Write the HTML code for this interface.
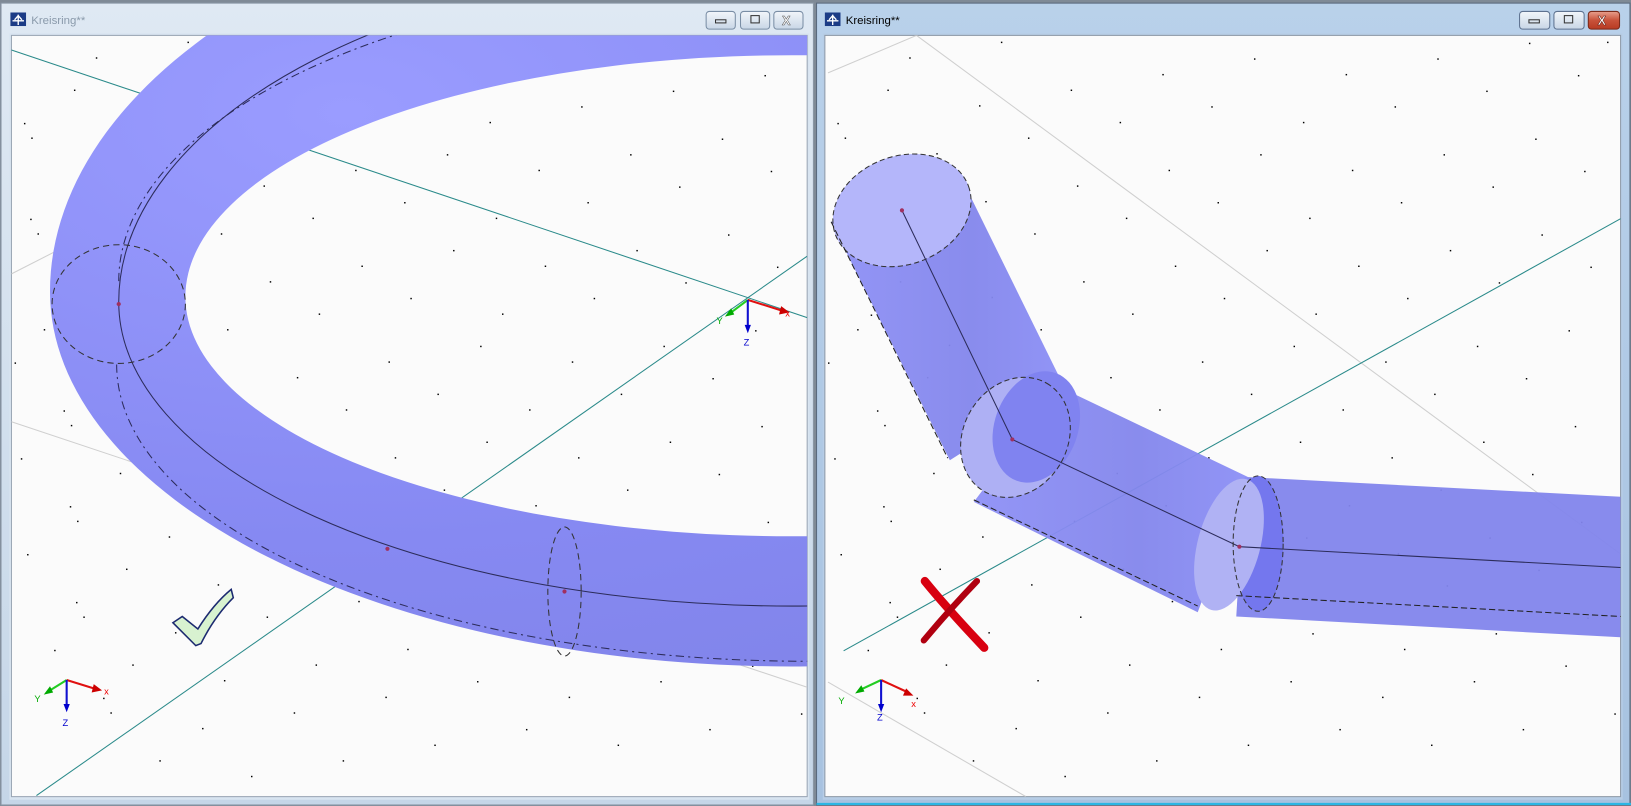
<!DOCTYPE html>
<html><head><meta charset="utf-8"><style>
html,body{margin:0;padding:0;background:#fff;overflow:hidden}
svg{display:block}
</style></head><body>
<svg width="1631" height="806" viewBox="0 0 1566 774" preserveAspectRatio="none" xmlns="http://www.w3.org/2000/svg">
<defs>
<linearGradient id="tb" x1="0" y1="0" x2="0" y2="1"><stop offset="0" stop-color="#dfe9f3"/><stop offset="1" stop-color="#c5d6e8"/></linearGradient>
<linearGradient id="tb2" x1="0" y1="0" x2="0" y2="1"><stop offset="0" stop-color="#b9d1ea"/><stop offset="1" stop-color="#a7c2e0"/></linearGradient>
<linearGradient id="btn" x1="0" y1="0" x2="0" y2="1"><stop offset="0" stop-color="#f2f6fa"/><stop offset="1" stop-color="#c8d6e6"/></linearGradient>
<linearGradient id="btnr" x1="0" y1="0" x2="0" y2="1"><stop offset="0" stop-color="#e8a08e"/><stop offset="0.5" stop-color="#c8523a"/><stop offset="1" stop-color="#b83a22"/></linearGradient>
<radialGradient id="ring" cx="0.2" cy="0.3" r="0.9"><stop offset="0" stop-color="#9a9cff"/><stop offset="0.6" stop-color="#8689f2"/><stop offset="1" stop-color="#7f82e6"/></radialGradient>
<linearGradient id="cyl" x1="0" y1="0" x2="1" y2="0"><stop offset="0" stop-color="#8e90f6"/><stop offset="0.6" stop-color="#8386ec"/><stop offset="1" stop-color="#8c8ff6"/></linearGradient>
<clipPath id="vl"><rect x="11" y="34" width="764" height="731"/></clipPath>
<clipPath id="vr"><rect x="792" y="34" width="764" height="731"/></clipPath>
</defs>
<rect width="1566" height="774" fill="#7f8a96"/>
<rect x="1" y="3" width="780" height="770" fill="url(#tb)" stroke="#8a97a6"/>
<rect x="9" y="32" width="768" height="736" fill="#d8e4f0"/>
<rect x="11" y="34" width="764" height="731" fill="#fbfbfb" stroke="#9aa6b4" stroke-width="1"/>
<g transform="translate(10,12)"><rect width="15" height="13" fill="#1c3c86"/><path d="M2 8h11M7.5 2v10M4 7l3.5-4 3.5 4" stroke="#fff" stroke-width="1.3" fill="none"/></g>
<text x="30" y="23" font-family="Liberation Sans, sans-serif" font-size="11" fill="#8a9aab">Kreisring**</text>
<g stroke="#7a8ea5" fill="url(#btn)"><rect x="678" y="11" width="28" height="17" rx="3"/><rect x="711" y="11" width="28" height="17" rx="3"/><rect x="743" y="11" width="28" height="17" rx="3"/></g>
<rect x="687" y="19" width="10" height="3" fill="none" stroke="#333"/><rect x="721" y="15" width="8" height="7" fill="none" stroke="#333"/>
<text x="751" y="24" font-family="Liberation Sans,sans-serif" font-size="12" font-weight="bold" fill="#fff" stroke="#555" stroke-width=".5">X</text>
<rect x="784" y="3" width="781" height="770" fill="url(#tb2)" stroke="#5a6a7e"/>
<rect x="790" y="32" width="768" height="736" fill="#b7cde6"/>
<rect x="792" y="34" width="764" height="731" fill="#fbfbfb" stroke="#8e9aa8"/>
<line x1="784" y1="772" x2="1566" y2="772" stroke="#2bb6e4" stroke-width="2"/>
<g transform="translate(792,12)"><rect width="15" height="13" fill="#1c3c86"/><path d="M2 8h11M7.5 2v10M4 7l3.5-4 3.5 4" stroke="#fff" stroke-width="1.3" fill="none"/></g>
<text x="812" y="23" font-family="Liberation Sans, sans-serif" font-size="11" fill="#000">Kreisring**</text>
<g stroke="#5e7290" fill="url(#btn)"><rect x="1459" y="11" width="29" height="17" rx="3"/><rect x="1492" y="11" width="29" height="17" rx="3"/></g>
<rect x="1525" y="11" width="30" height="17" rx="3" fill="url(#btnr)" stroke="#7a2a1a"/>
<rect x="1468" y="19" width="10" height="3" fill="none" stroke="#333"/><rect x="1502" y="15" width="8" height="7" fill="none" stroke="#333"/>
<text x="1534" y="24" font-family="Liberation Sans,sans-serif" font-size="12" font-weight="bold" fill="#fff" stroke="#5a1a10" stroke-width=".5">X</text>

<g clip-path="url(#vl)">
<g id="dotsL" fill="#000"></g>
<line x1="11" y1="48" x2="775" y2="305" stroke="#2a8a8a" stroke-width="1"/>
<line x1="35" y1="764" x2="775" y2="246" stroke="#2a8a8a" stroke-width="1"/>
<line x1="11" y1="405" x2="775" y2="660" stroke="#cfcfcf"/>
<line x1="11" y1="263" x2="60" y2="238" stroke="#cfcfcf"/>
<path fill-rule="evenodd" fill="url(#ring)" d="M48 280 A712 400 0 0 1 1472 280 A712 360 0 0 1 48 280 Z M178 285 A582 232 0 0 1 1342 285 A582 230 0 0 1 178 285 Z"/>
<path d="M114 290 A646 330 0 0 1 1406 290 M114 290 A646 292 0 0 0 1406 290" fill="none" stroke="#2c2c5a" stroke-width="1"/>
<path d="M114 270 A630 290 0 0 1 1374 270 M112 350 A663 285 0 0 0 1438 350" fill="none" stroke="#2c2c5a" stroke-width="1" stroke-dasharray="8 4 2 4"/>
<ellipse cx="114" cy="292" rx="64" ry="57" fill="none" stroke="#333" stroke-dasharray="6 4"/>
<ellipse cx="542" cy="568" rx="16" ry="62" fill="none" stroke="#333" stroke-dasharray="6 4"/>
<circle cx="114" cy="292" r="2" fill="#a03060"/><circle cx="542" cy="568" r="2" fill="#a03060"/><circle cx="372" cy="527" r="2" fill="#a03060"/>
<line x1="718" y1="288" x2="750" y2="298" stroke="#e01010" stroke-width="2"/><polygon points="750,294 758,300 748,302" fill="#c00"/><text x="754" y="304" font-size="9" fill="#e00" font-family="Liberation Sans,sans-serif">x</text>
<line x1="718" y1="288" x2="702" y2="300" stroke="#22cc22" stroke-width="2"/><polygon points="696,304 702,296 705,302" fill="#0a0"/><text x="688" y="311" font-size="9" fill="#0a0" font-family="Liberation Sans,sans-serif">Y</text>
<line x1="718" y1="288" x2="718" y2="314" stroke="#1010d0" stroke-width="2"/><polygon points="715,312 721,312 718,320" fill="#00c"/><text x="714" y="332" font-size="9" fill="#00c" font-family="Liberation Sans,sans-serif">Z</text>
<path d="M166 598 L175 592 L190 604 Q205 580 222 566 L224 574 Q206 592 193 618 L188 620 Z" fill="#d8f2d0" stroke="#1c2a70" stroke-width="1.5"/>
<line x1="64" y1="653" x2="90" y2="661" stroke="#e01010" stroke-width="2"/><polygon points="90,657 98,663 88,665" fill="#c00"/><text x="100" y="667" font-size="9" fill="#e00" font-family="Liberation Sans,sans-serif">x</text>
<line x1="64" y1="653" x2="48" y2="663" stroke="#22cc22" stroke-width="2"/><polygon points="42,667 48,659 51,665" fill="#0a0"/><text x="33" y="674" font-size="9" fill="#0a0" font-family="Liberation Sans,sans-serif">Y</text>
<line x1="64" y1="653" x2="64" y2="678" stroke="#1010d0" stroke-width="2"/><polygon points="61,676 67,676 64,684" fill="#00c"/><text x="60" y="697" font-size="9" fill="#00c" font-family="Liberation Sans,sans-serif">Z</text>
</g>

<g clip-path="url(#vr)">
<g id="dotsR" fill="#000"></g>
<line x1="795" y1="70" x2="880" y2="34" stroke="#cfcfcf"/>
<line x1="880" y1="34" x2="1556" y2="532" stroke="#cfcfcf"/>
<line x1="795" y1="655" x2="985" y2="765" stroke="#cfcfcf"/>
<line x1="810" y1="625" x2="1556" y2="210" stroke="#2a8a8a"/>
<polygon points="1195,458 1556,477 1556,612 1187,592" fill="#8285ec" opacity=".95"/>
<ellipse cx="1208" cy="522" rx="24" ry="65" fill="#7477ee"/>
<polygon points="1018,372 1198,458 1150,588 935,482" fill="url(#cyl)" opacity=".95"/>
<ellipse cx="1180" cy="523" rx="30" ry="65" fill="#b0b2f4" transform="rotate(15 1180 523)"/>
<polygon points="798,213 930,185 1022,372 912,442" fill="url(#cyl)" opacity=".95"/>
<ellipse cx="975" cy="420" rx="60" ry="50" fill="#aeb0f4" transform="rotate(-60 975 420)"/>
<ellipse cx="995" cy="410" rx="40" ry="55" fill="#8083f0" transform="rotate(20 995 410)"/>
<ellipse cx="866" cy="202" rx="68" ry="52" fill="#b4b6fa" stroke="#333" stroke-dasharray="5 3" transform="rotate(-20 866 202)"/>
<path d="M866 202 L972 422 L1190 525 L1556 545" fill="none" stroke="#2c2c5a"/>
<path d="M798 213 L910 440 M935 480 L1150 582 M1187 572 L1556 592" fill="none" stroke="#222" stroke-dasharray="6 3"/>
<ellipse cx="975" cy="420" rx="60" ry="50" fill="none" stroke="#333" stroke-dasharray="5 3" transform="rotate(-60 975 420)"/>
<ellipse cx="1208" cy="522" rx="24" ry="65" fill="none" stroke="#333" stroke-dasharray="5 3"/>
<circle cx="866" cy="202" r="2" fill="#a03060"/><circle cx="972" cy="422" r="2" fill="#a03060"/><circle cx="1190" cy="525" r="2" fill="#a03060"/>
<path d="M888 558 Q910 585 945 622" stroke="#d80010" stroke-width="8" stroke-linecap="round" fill="none"/>
<path d="M938 558 Q912 585 887 615" stroke="#b00010" stroke-width="6" stroke-linecap="round" fill="none"/>
<line x1="846" y1="653" x2="872" y2="665" stroke="#e01010" stroke-width="2"/><polygon points="870,661 877,668 867,668" fill="#c00"/><text x="875" y="679" font-size="9" fill="#e00" font-family="Liberation Sans,sans-serif">x</text>
<line x1="846" y1="653" x2="827" y2="662" stroke="#22cc22" stroke-width="2"/><polygon points="821,666 827,658 830,664" fill="#0a0"/><text x="805" y="676" font-size="9" fill="#0a0" font-family="Liberation Sans,sans-serif">Y</text>
<line x1="846" y1="653" x2="846" y2="678" stroke="#1010d0" stroke-width="2"/><polygon points="843,676 849,676 846,684" fill="#00c"/><text x="842" y="692" font-size="9" fill="#00c" font-family="Liberation Sans,sans-serif">Z</text>
</g>
</svg>
<script>
function dots(id,x0,x1){var g=document.getElementById(id),s="";
for(var r=0;r<16;r++){for(var c=0;c<9;c++){var x=x0+c*88+(r%2)*44+((r*37)%20)-10+r*6, y=40+r*46+((c*23)%30)-c*8;
 x=x0+((x-x0)%(x1-x0)+(x1-x0))%(x1-x0); if(y<36||y>762)continue;
 s+='<rect x="'+x.toFixed(0)+'" y="'+y.toFixed(0)+'" width="1.4" height="1.4"/>';}}
g.innerHTML=s;}
dots("dotsL",14,772);dots("dotsR",795,1553);
</script>
</body></html>
